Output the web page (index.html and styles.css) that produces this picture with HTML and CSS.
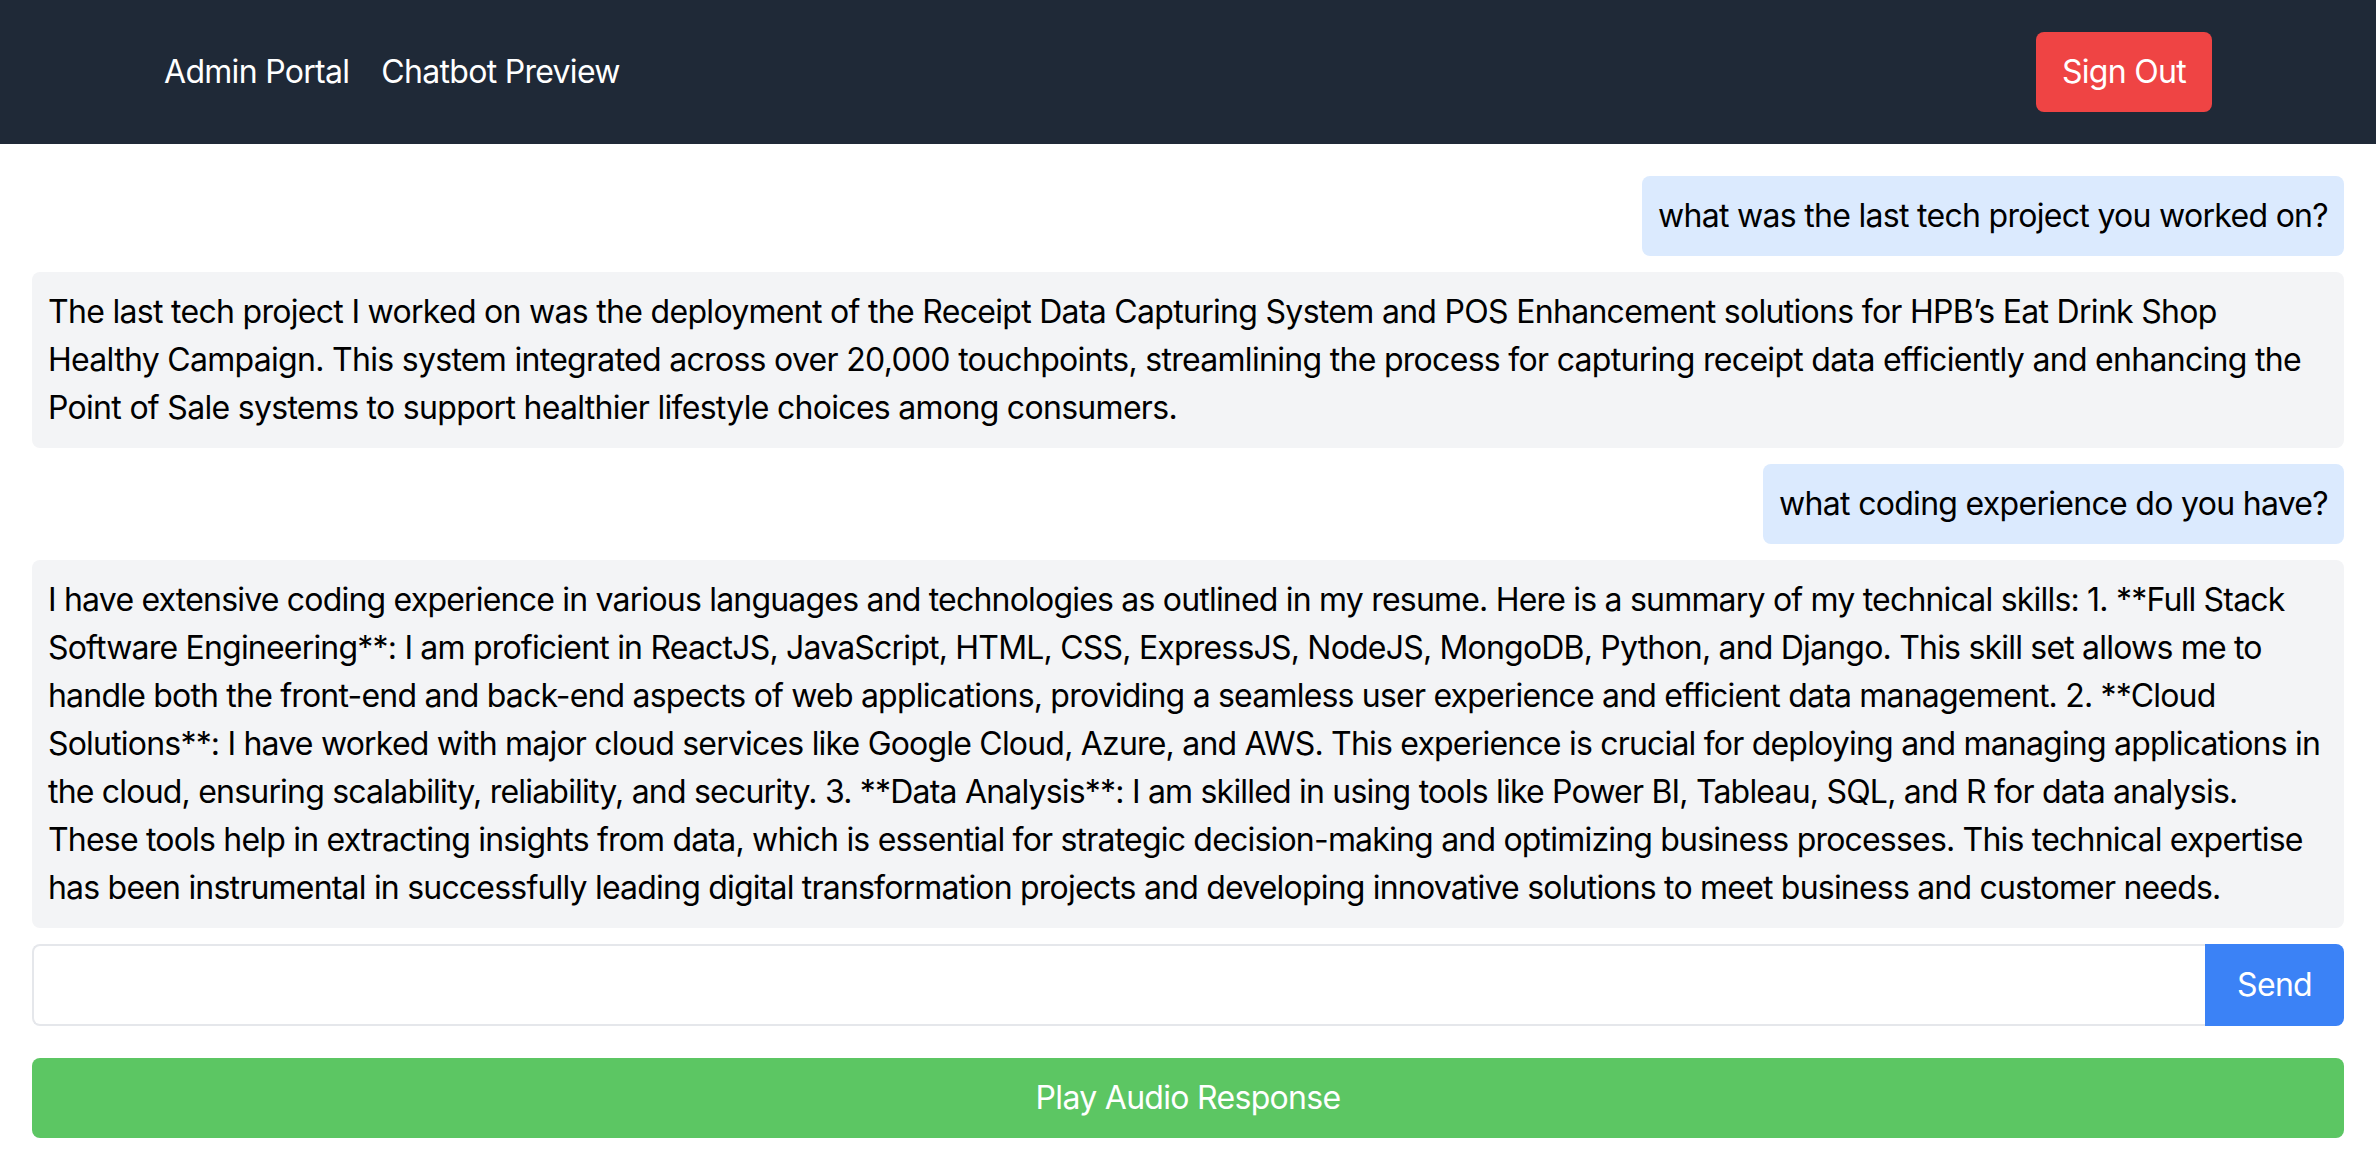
FILE: index.html
```html
<!DOCTYPE html>
<html lang="en">
<head>
<meta charset="utf-8">
<title>Chatbot Preview</title>
<link rel="stylesheet" href="styles.css">
</head>
<body>
<header class="topbar">
  <div class="container nav">
    <div class="links">
      <a class="link" href="#">Admin Portal</a>
      <a class="link" href="#">Chatbot Preview</a>
    </div>
    <button class="signout" type="button">Sign Out</button>
  </div>
</header>
<main class="chat">
  <div class="messages">
    <div class="msg user">what was the last tech project you worked on?</div>
    <div class="msg bot">The last tech project I worked on was the deployment of the Receipt Data Capturing System and POS Enhancement solutions for HPB’s Eat Drink Shop Healthy Campaign. This system integrated across over 20,000 touchpoints, streamlining the process for capturing receipt data efficiently and enhancing the Point of Sale systems to support healthier lifestyle choices among consumers.</div>
    <div class="msg user">what coding experience do you have?</div>
    <div class="msg bot long">I have extensive coding experience in various languages and technologies as outlined in my resume. Here is a summary of my technical skills: 1. **Full Stack Software Engineering**: I am proficient in ReactJS, JavaScript, HTML, CSS, ExpressJS, NodeJS, MongoDB, Python, and Django. This skill set allows me to handle both the front-end and back-end aspects of web applications, providing a seamless user experience and efficient data management. 2. **Cloud Solutions**: I have worked with major cloud services like Google Cloud, Azure, and AWS. This experience is crucial for deploying and managing applications in the cloud, ensuring scalability, reliability, and security. 3. **Data Analysis**: I am skilled in using tools like Power BI, Tableau, SQL, and R for data analysis. These tools help in extracting insights from data, which is essential for strategic decision-making and optimizing business processes. This technical expertise has been instrumental in successfully leading digital transformation projects and developing innovative solutions to meet business and customer needs.</div>
  </div>
  <form class="composer" onsubmit="return false;">
    <input class="field" type="text" aria-label="Message">
    <button class="send" type="submit">Send</button>
  </form>
  <button class="play" type="button">Play Audio Response</button>
</main>
</body>
</html>
```
FILE: styles.css
```css
* { box-sizing: border-box; }
html, body { margin: 0; padding: 0; background: #fff; }
body {
  font-family: Inter, "Liberation Sans", Arial, sans-serif;
  font-size: 32px;
  line-height: 48px;
  letter-spacing: -0.7px;
  color: #000;
}
.topbar {
  background: #1f2937;
  padding: 32px 0;
}
.container {
  width: 2048px;
  margin: 0 auto;
}
.nav {
  display: flex;
  align-items: center;
  justify-content: space-between;
}
.links { display: flex; gap: 32px; }
.link {
  color: #fff;
  text-decoration: none;
}
.signout {
  background: #ef4444;
  color: #fff;
  border: 0;
  border-radius: 8px;
  padding: 16px 26px;
  font: inherit;
  letter-spacing: inherit;
}
.chat {
  padding: 32px 32px;
}
.messages {
  display: flex;
  flex-direction: column;
  align-items: flex-start;
}
.msg {
  padding: 16px;
  border-radius: 8px;
  margin-bottom: 16px;
}
.msg.user {
  align-self: flex-end;
  background: #dbeafe;
}
.msg.bot {
  align-self: stretch;
  background: #f3f4f6;
}
.msg.long {
  letter-spacing: -0.8px;
}
.composer {
  display: flex;
  margin: 0;
}
.field {
  flex: 1;
  height: 82px;
  border: 2px solid #e5e7eb;
  border-right: 0;
  border-radius: 8px 0 0 8px;
  padding: 16px;
  font: inherit;
  outline: none;
}
.send {
  background: #3b82f6;
  color: #fff;
  border: 0;
  border-radius: 0 8px 8px 0;
  padding: 0 32px;
  font: inherit;
  letter-spacing: inherit;
}
.play {
  display: block;
  width: 100%;
  margin-top: 32px;
  height: 80px;
  background: #5cc663;
  color: #fff;
  border: 0;
  border-radius: 8px;
  font: inherit;
  letter-spacing: inherit;
}
```
